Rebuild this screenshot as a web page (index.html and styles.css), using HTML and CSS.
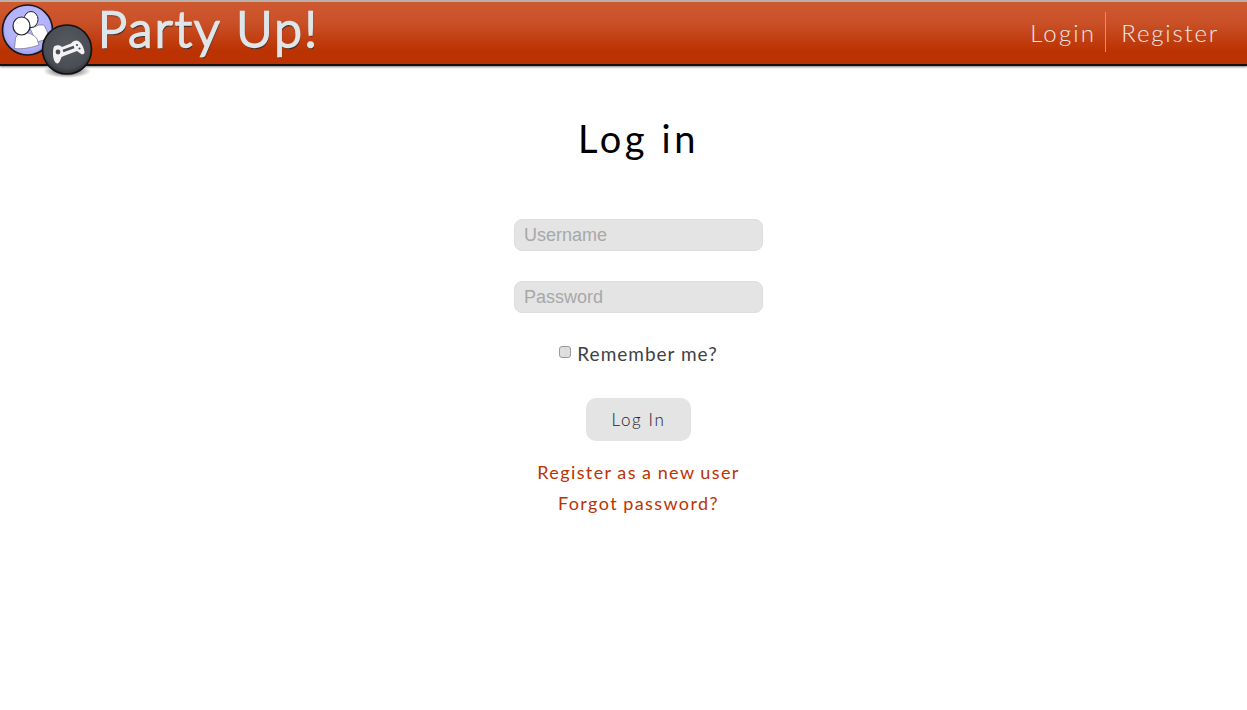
FILE: index.html
```html
<!DOCTYPE html>
<html lang="en">
<head>
<meta charset="utf-8">
<title>Party Up! - Log in</title>
<link rel="stylesheet" href="styles.css">
</head>
<body>
<header class="topbar">
  <a class="brand" href="#">
    <svg class="logo" width="96" height="80" viewBox="0 0 96 80" aria-hidden="true">
      <defs>
        <radialGradient id="violet" cx="50%" cy="45%" r="55%">
          <stop offset="0" stop-color="#bcbcff"/><stop offset="0.8" stop-color="#b2b2fb"/><stop offset="1" stop-color="#9a9ae8"/>
        </radialGradient>
        <radialGradient id="dark" cx="50%" cy="42%" r="58%">
          <stop offset="0" stop-color="#585a62"/><stop offset="0.8" stop-color="#4b4d55"/><stop offset="1" stop-color="#2f3035"/>
        </radialGradient>
        <radialGradient id="shade" cx="50%" cy="50%" r="50%">
          <stop offset="0.5" stop-color="#000" stop-opacity="0.4"/><stop offset="1" stop-color="#000" stop-opacity="0"/>
        </radialGradient>
      </defs>
      <circle cx="27.5" cy="28" r="25" fill="url(#violet)" stroke="#17171f" stroke-width="1.6"/>
      <path d="M30 26 C34 25 36 25 38 23 L44 23 L47 29 L49 37 L36 40 Z" fill="#fff" stroke="#6a6a86" stroke-width="0.7"/>
      <ellipse cx="31" cy="17.5" rx="7" ry="8" fill="#fff" stroke="#22222a" stroke-width="1"/>
      <path d="M14.500 46.500 L15.500 36 C16.500 33 19 32 22 31 L29 31 C32 33 36 34 37 37 L39 43 C32 45.500 22 47.500 14.500 46.500 Z" fill="#fff" stroke="#6a6a86" stroke-width="0.7"/>
      <ellipse cx="21.500" cy="24" rx="8.500" ry="9" fill="#fff" stroke="#22222a" stroke-width="1.200"/>
      <ellipse cx="67" cy="69" rx="24" ry="7" fill="url(#shade)"/>
      <circle cx="67" cy="47.500" r="24.500" fill="url(#dark)" stroke="#121214" stroke-width="1.600"/>
      <path d="M54 44.500 C57 42.500 60 43 62 45 L71 41.500 C73 39 76 37.500 78.500 39 C81.500 41 84 46 84.500 50 C84.500 52.500 82 53 80.500 51.500 L77 49 L65 53.500 L61.500 55 C60.500 58 59 61.500 57.500 61.500 C55 61.500 53 57 53 52 C53 49.500 53 46.500 54 44.500 Z" fill="#f2f2f2"/>
      <path d="M63 49 L74 45" stroke="#4b4d55" stroke-width="2.400" fill="none"/>
      <circle cx="58" cy="50" r="2.400" fill="#4b4d55"/>
      <circle cx="77" cy="43" r="1.100" fill="#4b4d55"/>
      <circle cx="79.500" cy="46.500" r="1.100" fill="#4b4d55"/>
    </svg>
    <span class="brand-name">Party Up!</span>
  </a>
  <nav class="top-nav">
    <a class="top-link" href="#">Login</a>
    <a class="top-link top-link-last" href="#">Register</a>
  </nav>
</header>
<main class="page">
  <h1 class="heading">Log in</h1>
  <form class="login-form">
    <input class="field" type="text" placeholder="Username">
    <input class="field" type="password" placeholder="Password">
    <label class="remember"><input class="check" type="checkbox"><span>Remember me?</span></label>
    <button class="submit" type="button">Log In</button>
  </form>
  <a class="link link-first" href="#">Register as a new user</a>
  <a class="link" href="#">Forgot password?</a>
</main>
</body>
</html>
```
FILE: styles.css
```css
* { box-sizing: border-box; }
html, body { margin: 0; padding: 0; }
body {
  background: #fff;
  font-family: "Lato", "Open Sans", sans-serif;
  height: 710px;
  overflow: hidden;
}
.topbar {
  height: 66px;
  display: flex;
  justify-content: space-between;
  align-items: stretch;
  position: relative;
  background: linear-gradient(#cf5a30 0%, #c94f26 35%, #bc3303 78%, #bc3303 100%);
  border-top: 2px solid #b9b0ac;
  border-bottom: 2px solid #111;
  box-shadow: 0 1px 2px rgba(0, 0, 0, 0.5);
}
.brand {
  display: block;
  padding-left: 98px;
  text-decoration: none;
}
.logo {
  position: absolute;
  left: 0;
  top: 0;
}
.brand-name {
  display: block;
  margin-top: -1px;
  font-size: 50px;
  font-weight: 300;
  line-height: 54px;
  letter-spacing: 2.3px;
  color: #dfe6ea;
  -webkit-text-stroke: 2.4px #dfe6ea;
  text-shadow: 1px 2px 1px #26262a;
}
.top-nav {
  display: flex;
  align-items: flex-start;
  padding: 10px 28px 0 0;
}
.top-link {
  height: 40px;
  line-height: 41px;
  font-size: 24px;
  font-weight: 300;
  letter-spacing: 2.2px;
  color: #efe9e6;
  text-decoration: none;
  padding: 0 9px 0 0;
  border-right: 1px solid #e08f70;
}
.top-link-last {
  border-right: 0;
  padding: 0 0 0 15px;
  letter-spacing: 1.8px;
}
.page {
  display: flex;
  flex-direction: column;
  align-items: center;
  padding-left: 30px;
}
.heading {
  margin: 47px 0 0;
  font-size: 38px;
  line-height: 50px;
  font-weight: 400;
  letter-spacing: 3.6px;
  color: #000;
}
.login-form {
  display: flex;
  flex-direction: column;
  align-items: center;
  margin-top: 56px;
}
.field {
  width: 249px;
  height: 32px;
  margin-bottom: 30px;
  padding: 0 9px;
  background: #e4e4e4;
  border: 1px solid #dedede;
  border-radius: 8px;
  font-family: "Liberation Sans", Arial, sans-serif;
  font-size: 18px;
  color: #333;
}
.field::placeholder { color: #a8a8a8; opacity: 1; }
.remember {
  display: flex;
  align-items: center;
  height: 24px;
  margin-top: -2px;
  font-size: 19px;
  letter-spacing: 1px;
  color: #3f3f46;
}
.check {
  appearance: none;
  width: 12px;
  height: 12px;
  margin: 0 6px 2px 0;
  background: #dedede;
  border: 1px solid #9a9a9a;
  border-radius: 3px;
}
.submit {
  width: 105px;
  height: 43px;
  margin-top: 33px;
  background: #e4e4e4;
  border: 0;
  border-radius: 10px;
  font-family: "Lato", sans-serif;
  font-size: 17px;
  font-weight: 300;
  letter-spacing: 1.6px;
  color: #22222a;
}
.link {
  font-size: 18px;
  line-height: 31px;
  letter-spacing: 1.4px;
  word-spacing: -0.8px;
  color: #bc3303;
  text-decoration: none;
}
.link-first { margin-top: 16px; }
```
